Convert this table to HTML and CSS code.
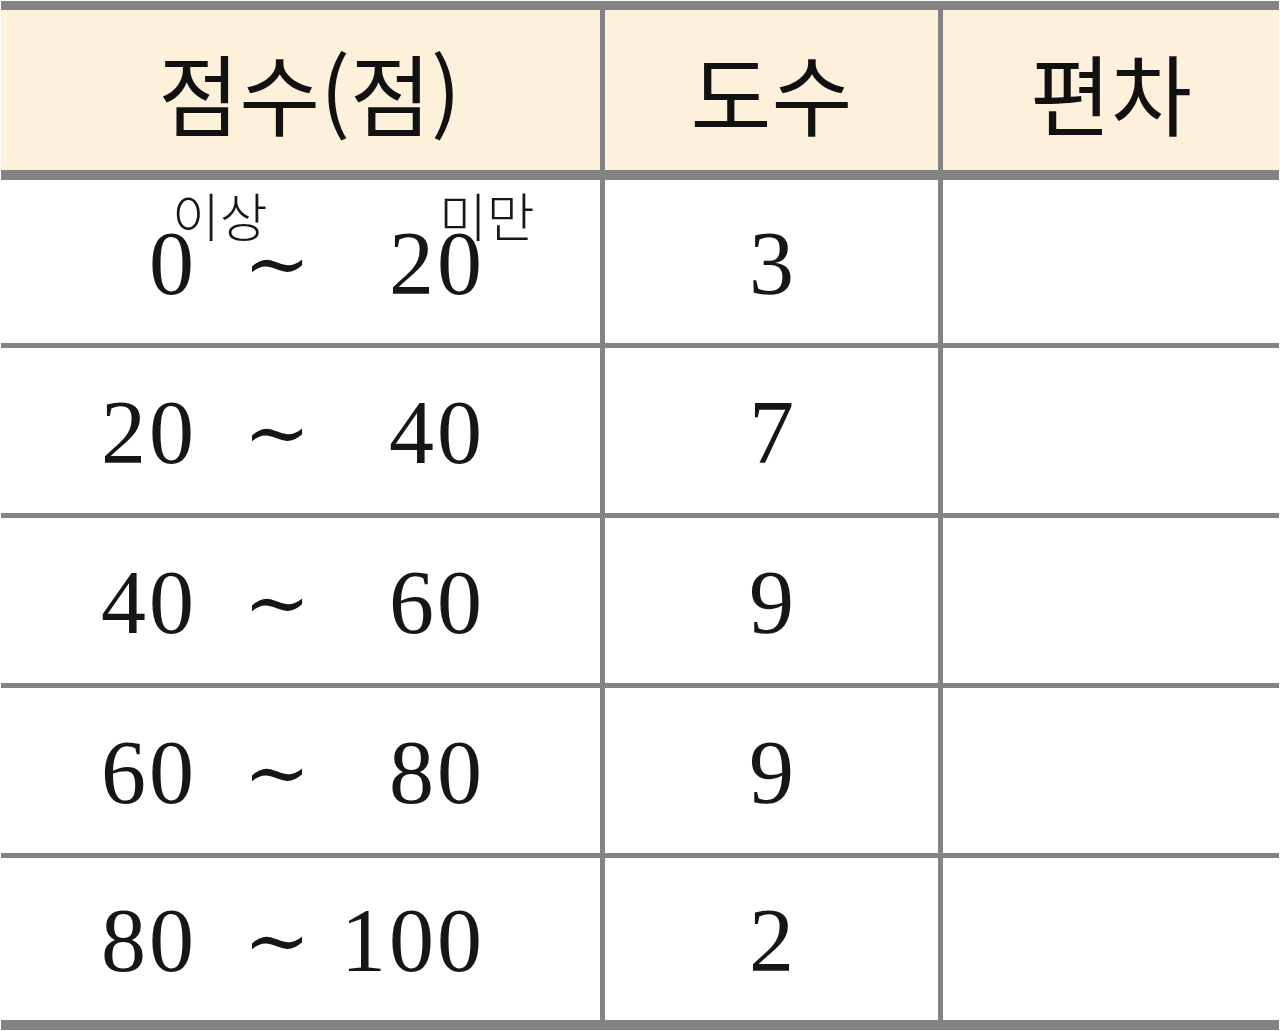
FILE: index.html
```html
<!DOCTYPE html>
<html lang="ko">
<head>
<meta charset="utf-8">
<title>점수 도수 편차</title>
<link rel="stylesheet" href="styles.css">
</head>
<body>
<div class="table">
  <div class="row head">
    <div class="cell c1"><span class="htext">점수(점)</span></div>
    <div class="cell c2"><span class="htext">도수</span></div>
    <div class="cell c3"><span class="htext">편차</span></div>
  </div>
  <div class="row r1">
    <div class="cell c1 range">
      <span class="lo"><span class="val">0<span class="note note-lo">이상</span></span></span>
      <span class="sim">∼</span>
      <span class="hi"><span class="val">20<span class="note note-hi">미만</span></span></span>
    </div>
    <div class="cell c2 num">3</div>
    <div class="cell c3"></div>
  </div>
  <div class="row">
    <div class="cell c1 range">
      <span class="lo"><span class="val">20</span></span>
      <span class="sim">∼</span>
      <span class="hi"><span class="val">40</span></span>
    </div>
    <div class="cell c2 num">7</div>
    <div class="cell c3"></div>
  </div>
  <div class="row">
    <div class="cell c1 range">
      <span class="lo"><span class="val">40</span></span>
      <span class="sim">∼</span>
      <span class="hi"><span class="val">60</span></span>
    </div>
    <div class="cell c2 num">9</div>
    <div class="cell c3"></div>
  </div>
  <div class="row">
    <div class="cell c1 range">
      <span class="lo"><span class="val">60</span></span>
      <span class="sim">∼</span>
      <span class="hi"><span class="val">80</span></span>
    </div>
    <div class="cell c2 num">9</div>
    <div class="cell c3"></div>
  </div>
  <div class="row last">
    <div class="cell c1 range">
      <span class="lo"><span class="val">80</span></span>
      <span class="sim">∼</span>
      <span class="hi"><span class="val">100</span></span>
    </div>
    <div class="cell c2 num">2</div>
    <div class="cell c3"></div>
  </div>
</div>
</body>
</html>
```
FILE: styles.css
```css
html, body {
  margin: 0;
  padding: 0;
  background: #ffffff;
}

body {
  padding-top: 1px;
  padding-left: 1px;
}

.table {
  width: 1278px;
  border-top: 9px solid #838383;
  border-bottom: 10px solid #838383;
  box-sizing: border-box;
}

.row {
  display: grid;
  grid-template-columns: 599px 338px 341px;
  height: 170px;
  border-top: 5px solid #838383;
  box-sizing: border-box;
}

.row.head {
  height: 170px;
  border-top: 0;
  border-bottom: 10px solid #838383;
  background: #fdf1dc;
}

.row.r1 {
  height: 163px;
  border-top: 0;
}

.row.last {
  height: 167px;
}

.cell {
  display: flex;
  align-items: center;
  justify-content: center;
  box-sizing: border-box;
}

.c2, .c3 {
  border-left: 5px solid #838383;
}

.htext {
  font-family: "Noto Sans CJK KR", "Noto Sans", sans-serif;
  font-size: 88px;
  line-height: 1;
  color: #111;
  padding-top: 1px;
}

.head .c1 .htext {
  padding-left: 18px;
}

.num, .range {
  font-family: "Liberation Serif", "DejaVu Serif", serif;
  font-size: 90px;
  line-height: 1;
  color: #161616;
  padding-top: 4px;
}

.range {
  justify-content: flex-start;
}

.lo, .hi {
  display: flex;
  justify-content: flex-end;
}

.lo {
  width: 193px;
}

.sim {
  width: 166px;
  text-align: center;
  font-family: "DejaVu Serif", serif;
  font-size: 80px;
  line-height: 1;
}

.hi {
  width: 122px;
}

.val {
  position: relative;
  white-space: nowrap;
  letter-spacing: 3px;
  margin-right: -3px;
}

.note {
  position: absolute;
  top: -25px;
  font-family: "Noto Sans CJK KR", "Noto Sans", sans-serif;
  font-size: 52px;
  font-weight: 300;
  line-height: 0.8;
  letter-spacing: 0;
  white-space: nowrap;
  color: #161616;
}

.note-lo {
  left: calc(100% - 25px);
}

.note-hi {
  left: calc(100% - 46px);
}
```
